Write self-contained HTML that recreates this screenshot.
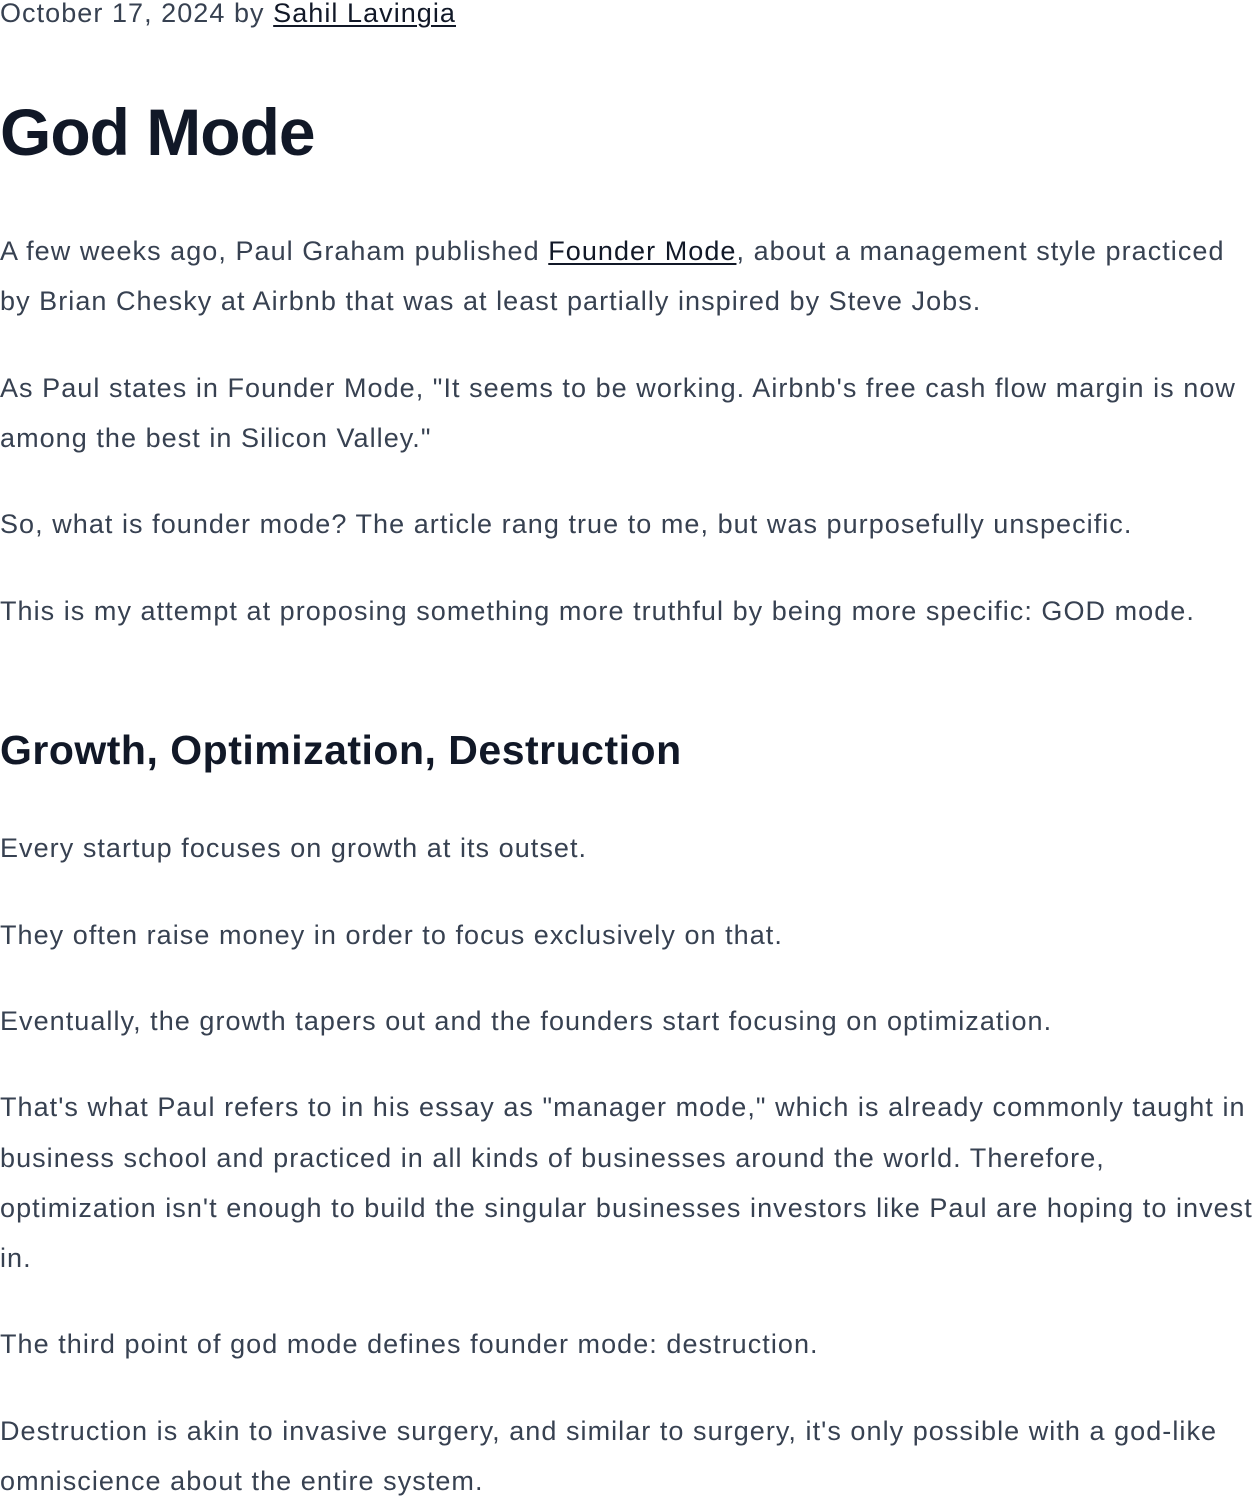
<!DOCTYPE html>
<html><head><meta charset="utf-8"><style>
html,body{margin:0;padding:0;background:#fff;width:1252px;height:1500px;overflow:hidden}
.l{position:absolute;left:0;white-space:nowrap;font-family:"Liberation Sans",sans-serif;color:#374151;font-size:27px;height:50px;line-height:50px;letter-spacing:1.05px}
a{color:#111827;text-decoration:underline;text-underline-offset:3px;text-decoration-thickness:2px}
.h1{font-size:66px;font-weight:bold;color:#111827;letter-spacing:-1px;height:80px;line-height:80px}
.h2{font-size:41px;font-weight:bold;color:#111827;letter-spacing:0.5px;height:60px;line-height:60px}
</style></head><body>
<div class="l" style="top:-12px">October 17, 2024 by <a>Sahil Lavingia</a></div>
<div class="l h1" style="top:92px">God Mode</div>
<div class="l" style="top:226px">A few weeks ago, Paul Graham published <a>Founder Mode</a>, about a management style practiced</div>
<div class="l" style="top:276px">by Brian Chesky at Airbnb that was at least partially inspired by Steve Jobs.</div>
<div class="l" style="top:363px">As Paul states in Founder Mode, "It seems to be working. Airbnb's free cash flow margin is now</div>
<div class="l" style="top:413px">among the best in Silicon Valley."</div>
<div class="l" style="top:499px">So, what is founder mode? The article rang true to me, but was purposefully unspecific.</div>
<div class="l" style="top:586px">This is my attempt at proposing something more truthful by being more specific: GOD mode.</div>
<div class="l h2" style="top:720px">Growth, Optimization, Destruction</div>
<div class="l" style="top:823px">Every startup focuses on growth at its outset.</div>
<div class="l" style="top:910px">They often raise money in order to focus exclusively on that.</div>
<div class="l" style="top:996px">Eventually, the growth tapers out and the founders start focusing on optimization.</div>
<div class="l" style="top:1082px">That's what Paul refers to in his essay as "manager mode," which is already commonly taught in</div>
<div class="l" style="top:1133px">business school and practiced in all kinds of businesses around the world. Therefore,</div>
<div class="l" style="top:1183px">optimization isn't enough to build the singular businesses investors like Paul are hoping to invest</div>
<div class="l" style="top:1233px">in.</div>
<div class="l" style="top:1319px">The third point of god mode defines founder mode: destruction.</div>
<div class="l" style="top:1406px">Destruction is akin to invasive surgery, and similar to surgery, it's only possible with a god-like</div>
<div class="l" style="top:1456px">omniscience about the entire system.</div>
</body></html>
